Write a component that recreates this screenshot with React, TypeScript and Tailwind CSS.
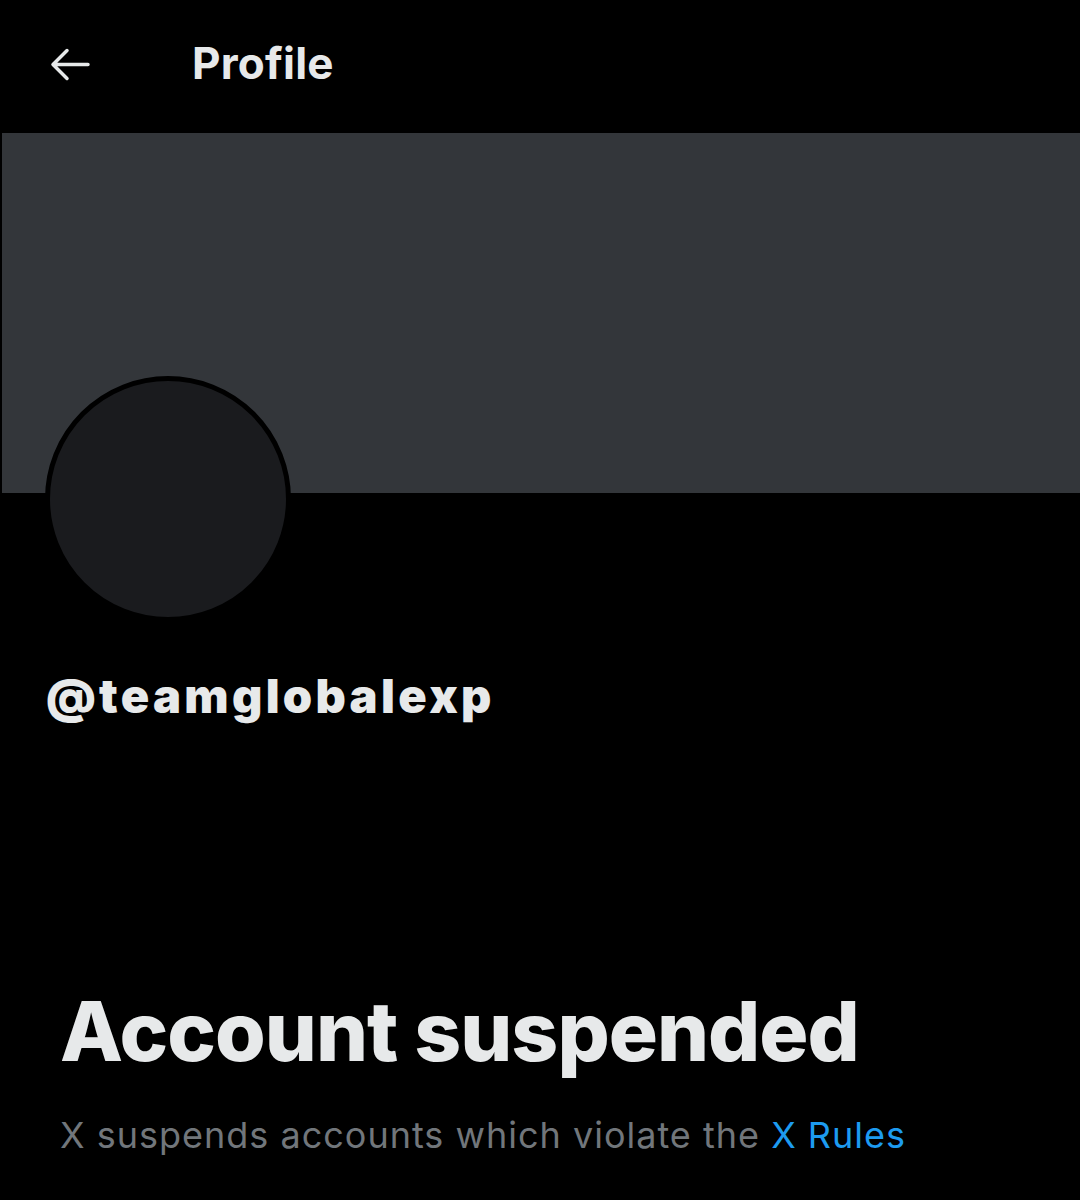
import React from "react";

export default function App() {
  return (
    <div className="w-[1080px] h-[1200px] bg-black overflow-hidden" style={{ fontFamily: "Inter, 'Noto Sans', sans-serif" }}>
      <div className="h-[133px] flex items-center pb-[8px]">
        <div className="w-[192px] flex items-center pl-[50px] pt-[4px]">
          <svg width="40" height="33" viewBox="0 0 40 33" fill="none" stroke="#e7e9ea" strokeWidth="3.5" strokeLinecap="round" strokeLinejoin="round">
            <path d="M38 16.5H3M17 2.5L3 16.5l14 14" />
          </svg>
        </div>
        <div className="text-[#e7e9ea] text-[44px] font-bold leading-none tracking-[0.2px]">Profile</div>
      </div>
      <div className="ml-[2px] h-[360px] bg-[#33363a]" />
      <div className="relative h-[0px]">
        <div className="absolute left-[45px] top-[-117px] w-[246px] h-[246px] rounded-full bg-[#1a1b1e] border-[5px] border-black" />
      </div>
      <div className="pt-[179px] pl-[46px] text-[#e7e9ea] text-[47px] font-black leading-none tracking-[3.3px]">@teamglobalexp</div>
      <div className="pt-[272px] pl-[60px] text-[#e7e9ea] text-[82px] font-extrabold leading-none tracking-[-1px]">Account suspended</div>
      <div className="pt-[44px] pl-[60px] text-[#71767b] text-[36px] leading-none tracking-[1px]">
        X suspends accounts which violate the <span className="text-[#1d9bf0]">X Rules</span>
      </div>
    </div>
  );
}
